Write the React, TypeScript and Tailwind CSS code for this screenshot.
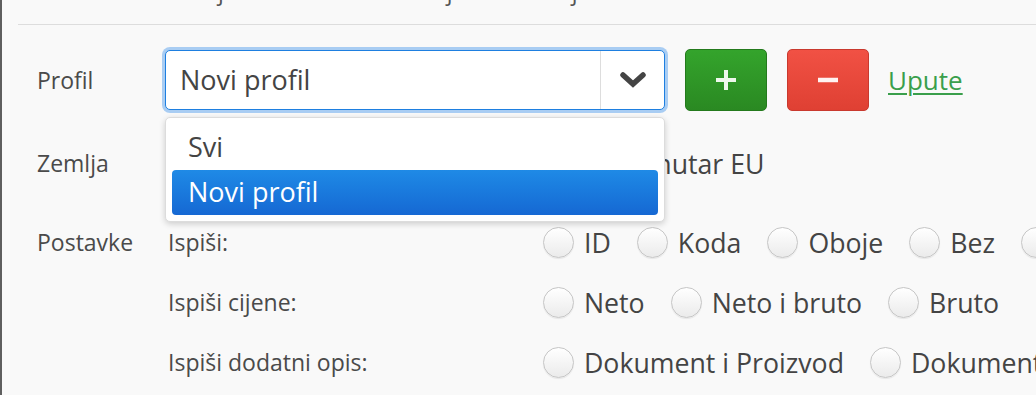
import React from "react";

const Radio = ({ label }: { label: string }) => (
  <label className="flex items-center mr-[26px] shrink-0">
    <span className="w-[31px] h-[31px] rounded-full border border-[#c6c6c6] bg-linear-to-b from-white to-[#ebebeb] shadow-[0_1px_1px_rgba(0,0,0,0.08)] shrink-0" />
    <span className="ml-[10px] text-[26.7px] text-[#444] whitespace-nowrap">{label}</span>
  </label>
);

const SubRow = ({ label, options }: { label: string; options: string[] }) => (
  <div className="flex items-center h-[60px]">
    <div className="w-[378px] pl-[3px] shrink-0 text-[23px] text-[#4a4a4a]">{label}</div>
    <div className="flex items-center mt-[2px]">
      {options.map((o) => (
        <Radio key={o} label={o} />
      ))}
    </div>
  </div>
);

export default function App() {
  return (
    <div className="w-[1036px] h-[395px] overflow-hidden bg-[#f9f9f9] border-l-2 border-[#5f5f5f] font-['Open_Sans',sans-serif] text-[#4a4a4a]">
      {/* descenders of the line above */}
      <div className="h-[24px] overflow-hidden">
        <div className="flex -mt-[21px] text-[23px] leading-[24px] text-[#555]">
          <span className="ml-[216px]">j</span>
          <span className="ml-[223px]">j</span>
          <span className="ml-[119px]">j</span>
        </div>
      </div>
      <div className="ml-[16px] border-t border-[#dddddd]" />

      {/* Profil */}
      <div className="flex items-center mt-[25px] h-[60px]">
        <div className="w-[163px] pl-[35px] shrink-0 text-[23px]">Profil</div>
        <div className="relative">
          <div className="flex w-[500px] h-[60px] bg-white border border-[#1e7fe0] rounded-[5px] ring-[3px] ring-[#a9cdf3]">
            <div className="flex-1 flex items-center pl-[14px] text-[27px] text-[#444]">Novi profil</div>
            <div className="w-[64px] border-l border-[#dddddd] flex items-center justify-center">
              <svg width="26" height="16" viewBox="0 0 26 16">
                <polyline points="3,3 13,12 23,3" fill="none" stroke="#444" strokeWidth="5.5" strokeLinecap="round" strokeLinejoin="miter" />
              </svg>
            </div>
          </div>
          {/* open dropdown */}
          <div className="absolute left-0 top-[67px] w-[500px] z-10 bg-white border border-[#dcdcdc] rounded-[5px] shadow-[0_2px_6px_rgba(0,0,0,0.18)] p-[6px]">
            <div className="h-[46px] flex items-center pl-[16px] text-[27px] text-[#444]">Svi</div>
            <div className="h-[45px] flex items-center pl-[16px] text-[27px] text-white rounded-[4px] bg-linear-to-b from-[#1f8ae6] to-[#1668d3]">
              Novi profil
            </div>
          </div>
        </div>
        <button className="ml-[20px] w-[82px] h-[62px] rounded-[5px] border border-[#247a1d] bg-linear-to-b from-[#34a42c] to-[#2a8922] flex items-center justify-center">
          <svg width="22" height="22" viewBox="0 0 22 22">
            <path d="M11 1v20M1 11h20" stroke="#eef8ec" strokeWidth="4" />
          </svg>
        </button>
        <button className="ml-[20px] w-[82px] h-[62px] rounded-[5px] border border-[#c9392e] bg-linear-to-b from-[#f15144] to-[#df4033] flex items-center justify-center">
          <svg width="22" height="22" viewBox="0 0 22 22">
            <path d="M1 11h20" stroke="#fff3f2" strokeWidth="4.5" />
          </svg>
        </button>
        <a className="ml-[19px] text-[26px] text-[#3a9f4c] underline underline-offset-[3px] decoration-[1.5px]">Upute</a>
      </div>

      {/* Zemlja */}
      <div className="flex items-center mt-[23px] h-[60px]">
        <div className="w-[163px] pl-[35px] shrink-0 text-[23px]">Zemlja</div>
        <div className="flex items-center ml-[253px] mt-[2px]">
          <Radio label="Hrvatska" />
          <Radio label="Unutar EU" />
        </div>
      </div>

      {/* Postavke */}
      <div className="flex mt-[19px]">
        <div className="w-[163px] pl-[35px] shrink-0 h-[60px] flex items-center text-[23px]">Postavke</div>
        <div className="flex flex-col">
          <SubRow label="Ispiši:" options={["ID", "Koda", "Oboje", "Bez", "Ostalo"]} />
          <SubRow label="Ispiši cijene:" options={["Neto", "Neto i bruto", "Bruto"]} />
          <SubRow label="Ispiši dodatni opis:" options={["Dokument i Proizvod", "Dokument"]} />
        </div>
      </div>
    </div>
  );
}
